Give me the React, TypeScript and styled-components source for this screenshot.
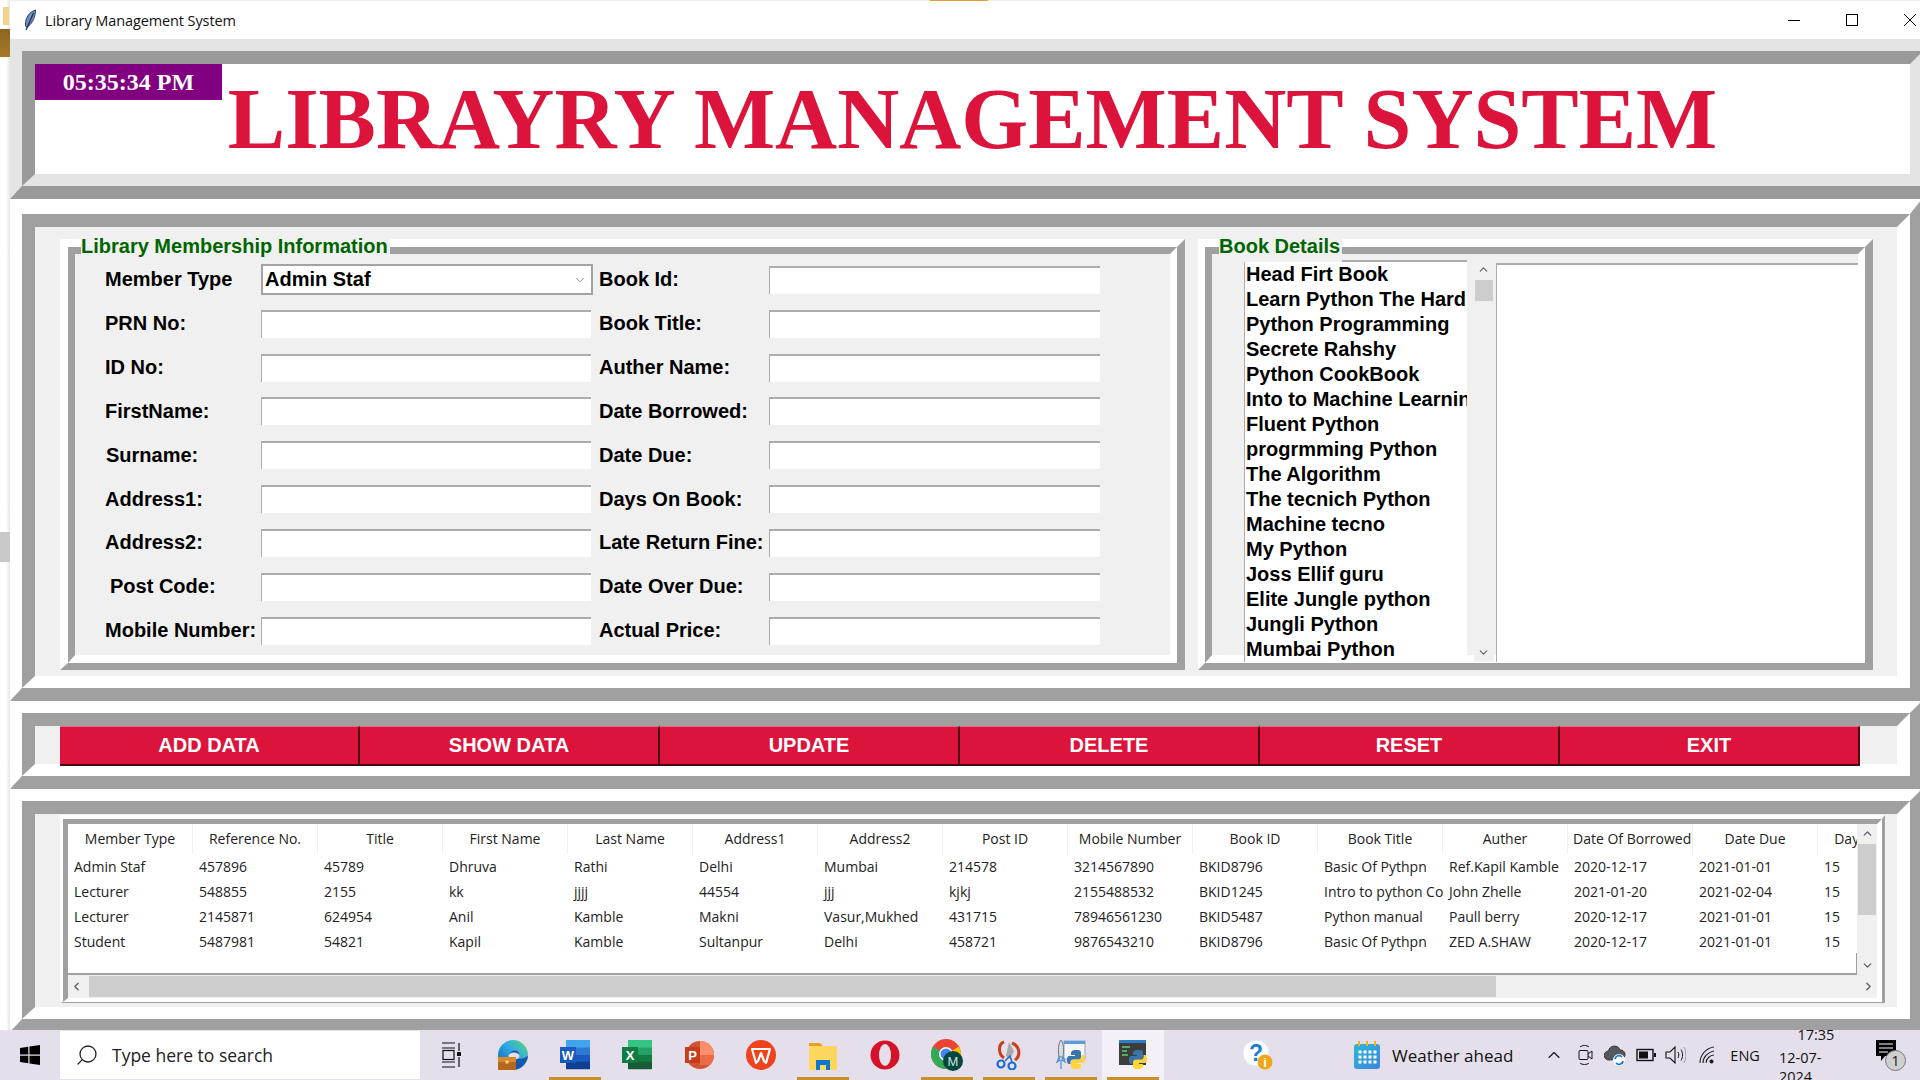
import React from "react";
import styled, { createGlobalStyle } from "styled-components";
import { ChevronDown, ChevronLeft, ChevronRight, ChevronUp, Search } from "lucide-react";

const MEMBER_LABELS = ["Member Type", "PRN No:", "ID No:", "FirstName:", "Surname:", "Address1:", "Address2:", "Post Code:", "Mobile Number:"];
const BOOK_LABELS = ["Book Id:", "Book Title:", "Auther Name:", "Date Borrowed:", "Date Due:", "Days On Book:", "Late Return Fine:", "Date Over Due:", "Actual Price:"];
const BOOKS = ["Head Firt Book", "Learn Python The Hard Way", "Python Programming", "Secrete Rahshy", "Python CookBook", "Into to Machine Learning", "Fluent Python", "progrmming Python", "The Algorithm", "The tecnich Python", "Machine tecno", "My Python", "Joss Ellif guru", "Elite Jungle python", "Jungli Python", "Mumbai Python"];
const BUTTONS = ["ADD DATA", "SHOW DATA", "UPDATE", "DELETE", "RESET", "EXIT"];
const COLUMNS = ["Member Type", "Reference No.", "Title", "First Name", "Last Name", "Address1", "Address2", "Post ID", "Mobile Number", "Book ID", "Book Title", "Auther", "Date Of Borrowed", "Date Due", "Days On Book"];
const ROWS = [
  ["Admin Staf", "457896", "45789", "Dhruva", "Rathi", "Delhi", "Mumbai", "214578", "3214567890", "BKID8796", "Basic Of Pythpn", "Ref.Kapil Kamble", "2020-12-17", "2021-01-01", "15"],
  ["Lecturer", "548855", "2155", "kk", "jjjj", "44554", "jjj", "kjkj", "2155488532", "BKID1245", "Intro to python Cookbook", "John Zhelle", "2021-01-20", "2021-02-04", "15"],
  ["Lecturer", "2145871", "624954", "Anil", "Kamble", "Makni", "Vasur,Mukhed", "431715", "78946561230", "BKID5487", "Python manual", "Paull berry", "2020-12-17", "2021-01-01", "15"],
  ["Student", "5487981", "54821", "Kapil", "Kamble", "Sultanpur", "Delhi", "458721", "9876543210", "BKID8796", "Basic Of Pythpn", "ZED A.SHAW", "2020-12-17", "2021-01-01", "15"],
];

const GlobalStyle = createGlobalStyle`
  html, body {
    margin: 0;
    width: 1920px;
    height: 1080px;
    overflow: hidden;
    background: #fff;
  }
  * { box-sizing: border-box; }
`;

//layout
const Screen = styled.div`
  width: 1920px;
  height: 1080px;
  display: flex;
  flex-direction: column;
  font-family: "Liberation Sans", Arial, sans-serif;
`;
const Desktop = styled.div`
  flex: 1;
  min-height: 0;
  display: flex;
`;
const Sliver = styled.div`
  width: 10px;
  flex-shrink: 0;
  background: linear-gradient(to right, #fff 60%, #e6e6e6);
  .note { width: 6px; height: 18px; margin: 7px 0 0 3px; background: #f2d58a; }
  .wood { height: 28px; margin-top: 4px; background: linear-gradient(#8c6420, #a87a28); }
  .gray { height: 30px; margin-top: 475px; background: #c9c9c9; }
`;
const Window = styled.div`
  position: relative;
  flex: 1;
  min-width: 0;
  height: 1030px;
  overflow: hidden;
  background: #fff;
`;
const TitleBar = styled.div`
  height: 39px;
  display: flex;
  align-items: center;
  padding-left: 13px;
  border-top: 1px solid #f0f0f0;
  background: #fff;
  font: 14.5px "Open Sans", sans-serif;
  color: #111;
  .label { margin-left: 8px; letter-spacing: -0.1px; }
`;
const OrangeEdge = styled.div`
  position: absolute;
  top: 0;
  left: 920px;
  width: 58px;
  height: 1px;
  background: #e0a030;
`;
const WinButtons = styled.div`
  margin-left: auto;
  display: flex;
  align-items: center;
  padding-right: 4px;
  svg { display: block; margin-left: 46px; }
`;

//tk style ridge: two nested solid borders
type RidgeProps = { $light: string; $dark: string; $w: string };
const RidgeOut = styled.div<RidgeProps & { $width?: number; $height?: number }>`
  border-style: solid;
  border-width: ${({ $w }) => $w};
  border-color: ${({ $light, $dark }) => `${$light} ${$dark} ${$dark} ${$light}`};
  width: ${({ $width }) => ($width ? `${$width}px` : "auto")};
  height: ${({ $height }) => ($height ? `${$height}px` : "auto")};
  flex-shrink: 0;
  position: relative;
`;
const RidgeIn = styled.div<RidgeProps>`
  height: 100%;
  border-style: solid;
  border-width: ${({ $w }) => $w};
  border-color: ${({ $light, $dark }) => `${$dark} ${$light} ${$light} ${$dark}`};
`;

const BigFrame: React.FC<{ width?: number; height: number; top?: number; light?: string; dark?: string; children: React.ReactNode }> = ({
  width = 1912, height, top = 12, light = "#ffffff", dark = "#a0a0a0", children,
}) => (
  <RidgeOut $light={light} $dark={dark} $w={`${top}px 12px 13px 12px`} $width={width} $height={height}>
    <RidgeIn $light={light} $dark={dark} $w="13px 13px 12px 13px">{children}</RidgeIn>
  </RidgeOut>
);

const Banner = styled.div`
  position: relative;
  height: 100%;
  background: #fff;
  display: flex;
  align-items: center;
  justify-content: center;
`;
const Clock = styled.div`
  position: absolute;
  top: 0;
  left: 0;
  width: 187px;
  height: 36px;
  background: #800080;
  color: #fff;
  font: bold 24px "Liberation Serif", serif;
  display: flex;
  align-items: center;
  justify-content: center;
`;
const BigTitle = styled.h1`
  margin: 0;
  color: #dc143c;
  font: bold 86px "Liberation Serif", serif;
  white-space: nowrap;
`;

const InfoBody = styled.div`
  height: 100%;
  background: #f0f0f0;
  padding: 12px 0 0 25px;
  display: flex;
  gap: 13px;
`;
const Legend = styled.div<{ $left: number }>`
  position: absolute;
  top: -8px;
  left: ${({ $left }) => $left}px;
  padding-right: 2px;
  height: 23px;
  line-height: 14px;
  background: #f0f0f0;
  color: #006400;
  font-weight: bold;
  font-size: 20px;
  white-space: nowrap;
  z-index: 1;
`;
const FormGrid = styled.div`
  padding: 4px 0 0 30px;
  display: grid;
  grid-template-columns: 156px 332px 176px 331px;
  grid-auto-rows: 43.83px;
  align-items: center;
  background: #f0f0f0;
  height: 100%;
`;
const FieldLabel = styled.label<{ $indent?: number }>`
  padding-left: ${({ $indent }) => $indent ?? 0}px;
  font-size: 20px;
  font-weight: bold;
  color: #000;
  white-space: nowrap;
`;
const Entry = styled.div`
  width: 330px;
  height: 28px;
  background: #fff;
  border-top: 2px solid #acacac;
  border-left: 1px solid #acacac;
`;
const Combo = styled.div`
  width: 332px;
  height: 31px;
  background: #fff;
  border: 2px solid #a3a3a3;
  padding: 0 4px 0 2px;
  display: flex;
  align-items: center;
  justify-content: space-between;
  font-size: 20px;
  font-weight: bold;
  color: #000;
`;
const BookBody = styled.div`
  height: 100%;
  padding: 6px 0 0 32px;
  display: flex;
  background: #f0f0f0;
`;
const ListBox = styled.ul`
  margin: 0;
  padding: 0 0 0 1px;
  width: 226px;
  height: 402px;
  list-style: none;
  overflow: hidden;
  background: #fff;
  border-top: 2px solid #acacac;
  border-left: 1px solid #acacac;
  li {
    height: 25px;
    line-height: 25px;
    font-size: 20px;
    font-weight: bold;
    color: #000;
    white-space: nowrap;
  }
`;
const VScroll = styled.div<{ $h: number; $thumbTop: number; $thumbH: number; $ml?: number }>`
  position: relative;
  width: 20px;
  height: ${({ $h }) => $h}px;
  margin-left: ${({ $ml }) => $ml ?? 0}px;
  flex-shrink: 0;
  background: #f0f0f0;
  display: flex;
  flex-direction: column;
  align-items: center;
  justify-content: space-between;
  padding: 3px 0;
  color: #606060;
  &::after {
    content: "";
    position: absolute;
    left: 1px;
    right: 1px;
    top: ${({ $thumbTop }) => $thumbTop}px;
    height: ${({ $thumbH }) => $thumbH}px;
    background: #cdcdcd;
  }
`;
const TextBox = styled.div`
  width: 368px;
  height: 399px;
  margin: 3px 0 0 2px;
  background: #fff;
  border-top: 2px solid #acacac;
  border-left: 1px solid #acacac;
`;

const ButtonBody = styled.div`
  height: 100%;
  background: #f0f0f0;
  padding-left: 25px;
`;
const ButtonRow = styled.div`
  width: 1800px;
  height: 40px;
  display: flex;
`;
const ActionButton = styled.button`
  flex: 1;
  padding: 0;
  background: #dc143c;
  color: #fff;
  border: 0;
  border-top: 1px solid #ee6a84;
  border-bottom: 2px solid #4a0714;
  border-right: 2px solid #4a0714;
  font: bold 20px "Liberation Sans", Arial, sans-serif;
`;

const TableBody = styled.div`
  height: 100%;
  background: #f0f0f0;
  padding: 1px 0 0 25px;
`;
const TreeArea = styled.div`
  height: 100%;
  display: grid;
  grid-template-columns: 1789px 20px;
  grid-template-rows: 151px 23px;
  background: #f0f0f0;
`;
const TreeView = styled.div`
  position: relative;
  overflow: hidden;
  background: #fff;
  border-bottom: 2px solid #a0a0a0;
  font: 14px "Open Sans", sans-serif;
  color: #222;
  &::after {
    content: "";
    position: absolute;
    right: 0;
    bottom: 0;
    width: 1px;
    height: 20px;
    background: #a0a0a0;
  }
`;
const HeadRow = styled.div`
  display: flex;
  height: 30px;
  width: 1875px;
`;
const HeadCell = styled.div`
  width: 125px;
  flex-shrink: 0;
  line-height: 30px;
  text-align: center;
  overflow: hidden;
  white-space: nowrap;
  border-right: 1px solid #efefef;
  padding: 0 5px;
`;
const DataRow = styled.div`
  display: flex;
  height: 25px;
  width: 1875px;
`;
const DataCell = styled.div`
  width: 125px;
  flex-shrink: 0;
  line-height: 25px;
  padding: 0 5px 0 6px;
  overflow: hidden;
  white-space: nowrap;
`;
const HScroll = styled.div`
  position: relative;
  height: 23px;
  grid-column: 1 / 3;
  background: #f0f0f0;
  display: flex;
  align-items: center;
  justify-content: space-between;
  padding: 0 2px 0 2px;
  color: #606060;
  &::after {
    content: "";
    position: absolute;
    left: 21px;
    width: 1407px;
    top: 1px;
    bottom: 1px;
    background: #cdcdcd;
  }
`;

//taskbar
const TaskBar = styled.div`
  height: 50px;
  flex-shrink: 0;
  display: flex;
  align-items: center;
  background: #e5dfeb;
  color: #111;
  font-family: "Open Sans", sans-serif;
`;
const StartSlot = styled.div`
  width: 60px;
  display: flex;
  justify-content: center;
`;
const SearchBox = styled.div`
  width: 360px;
  height: 48px;
  background: #fff;
  display: flex;
  align-items: center;
  padding-left: 15px;
  gap: 13px;
  font-size: 17.5px;
  color: #222;
`;
const TaskSlot = styled.div<{ $open?: boolean; $active?: boolean }>`
  position: relative;
  width: 62px;
  height: 50px;
  display: flex;
  align-items: center;
  justify-content: center;
  background: ${({ $active }) => ($active ? "#f3f0f7" : "transparent")};
  &::after {
    content: "";
    display: ${({ $open }) => ($open ? "block" : "none")};
    position: absolute;
    left: 5px;
    right: 5px;
    bottom: 0;
    height: 3px;
    background: #c98f2b;
  }
`;
const TrayItem = styled.div<{ $ml: number }>`
  margin-left: ${({ $ml }) => $ml}px;
  display: flex;
  align-items: center;
  flex-shrink: 0;
  font-size: ${({ $ml }) => ($ml === 12 ? "17px" : "14.5px")};
  white-space: nowrap;
`;
const ClockStack = styled.div`
  margin-left: 19px;
  width: 74px;
  display: flex;
  flex-direction: column;
  align-items: center;
  gap: 4px;
  font-size: 14.5px;
  line-height: 19px;
`;
const NoteWrap = styled.div`
  position: relative;
  margin-left: 23px;
  width: 30px;
  height: 30px;
`;
const NoteBadge = styled.span`
  position: absolute;
  right: 0;
  bottom: -1px;
  width: 21px;
  height: 21px;
  border-radius: 50%;
  background: #cfcfcf;
  border: 1px solid #777;
  color: #111;
  font-size: 14px;
  line-height: 19px;
  text-align: center;
`;

//icons
const Svg: React.FC<{ s?: number; w?: number; h?: number; children: React.ReactNode }> = ({ s = 30, w, h, children }) => (
  <svg width={w ?? s} height={h ?? s} viewBox={`0 0 ${w ?? s} ${h ?? s}`} fill="none">{children}</svg>
);
const Feather = () => (
  <Svg w={14} h={22}>
    <path d="M12.5 1C6 3 2.5 9 2.5 15c0 1.5.5 3 1.2 3.5C8 16 12.5 9 12.5 1z" fill="#6f8fc4" stroke="#2c3f63" strokeWidth="1" />
    <path d="M10.5 4L3 21" stroke="#1d2a44" strokeWidth="1.2" />
  </Svg>
);
const StartIcon = () => (
  <Svg w={20} h={20}>
    <path d="M0 3l8.3-1.2v7.7H0zM9.5 1.6L20 0v9.5H9.5zM0 10.7h8.3v7.6L0 17.1zM9.5 10.7H20V20L9.5 18.5z" fill="#000" />
  </Svg>
);
const TaskViewIcon = () => (
  <Svg w={20} h={26}>
    <path d="M1 1h13M1 6h13M1 20h13M1 25h13M18 1v8M18 15v10" stroke="#111" strokeWidth="1.2" />
    <rect x="2" y="8.5" width="11" height="9" stroke="#111" strokeWidth="1.2" />
    <rect x="16" y="10" width="4" height="4" fill="#111" />
  </Svg>
);
const EdgeIcon = () => (
  <Svg>
    <defs>
      <linearGradient id="edge" x1="0" y1="1" x2="1" y2="0">
        <stop offset="0" stopColor="#0c59a4" />
        <stop offset="0.55" stopColor="#2fa8e8" />
        <stop offset="1" stopColor="#5fdc72" />
      </linearGradient>
    </defs>
    <circle cx="15" cy="15" r="15" fill="url(#edge)" />
    <path d="M11 15c1-5 8-6 10-2 1 3-2 5-4 5 3 2 8 1 13-2-1 8-8 14-15 14z" fill="#1557a8" />
    <ellipse cx="16" cy="16" rx="5.5" ry="3.5" fill="#e5dfeb" />
    <rect x="0" y="17" width="18" height="13" rx="1" fill="#b4681e" />
    <rect x="0" y="17" width="18" height="5" fill="#d98a2c" />
    <rect x="7.5" y="20.5" width="3" height="3" fill="#ffd27a" />
  </Svg>
);
const BandIcon: React.FC<{ colors: string[]; badge: string; letter: string }> = ({ colors, badge, letter }) => (
  <Svg>
    {colors.map((c, i) => (
      <rect key={c} x="6" y={i * 7.25} width="24" height="7.5" fill={c} />
    ))}
    <rect x="0" y="7" width="16" height="16" fill={badge} />
    <text x="8" y="20" textAnchor="middle" fill="#fff" fontSize="13" fontWeight="bold" fontFamily="Liberation Sans">{letter}</text>
  </Svg>
);
const PowerPointIcon = () => (
  <Svg>
    <circle cx="16" cy="15" r="14" fill="#d35230" />
    <path d="M16 1a14 14 0 0 1 14 14H16z" fill="#ff8f6b" />
    <path d="M16 15h14a14 14 0 0 1-4 10H16z" fill="#ed6c47" />
    <rect x="1" y="7" width="15" height="16" fill="#c43e1c" />
    <text x="8.5" y="20" textAnchor="middle" fill="#fff" fontSize="13" fontWeight="bold" fontFamily="Liberation Sans">P</text>
  </Svg>
);
const WpsIcon = () => (
  <Svg>
    <circle cx="15" cy="15" r="15" fill="#f0421c" />
    <path d="M6 9h18l-4 14-2-2-3-8-3 8-2 2z" stroke="#fff" strokeWidth="2.2" strokeLinejoin="round" />
  </Svg>
);
const FolderIcon = () => (
  <Svg w={28} h={30}>
    <path d="M0 3h11l3 3H0z" fill="#e5a21a" />
    <rect x="0" y="6" width="28" height="24" rx="1" fill="#fdd65c" />
    <path d="M7 30V20h14v10h-4v-5h-6v5z" fill="#0e78c8" />
  </Svg>
);
const OperaIcon = () => (
  <Svg>
    <circle cx="15" cy="15" r="14.5" fill="#d5122a" />
    <ellipse cx="15" cy="15" rx="6" ry="11" fill="#e5dfeb" />
  </Svg>
);
const ChromeIcon = () => (
  <Svg w={32} h={32}>
    <circle cx="15" cy="15" r="15" fill="#ea4335" />
    <path d="M15 15L28 7.5A15 15 0 0 1 15 30z" fill="#fbbc05" />
    <path d="M15 15L15 30A15 15 0 0 1 2 7.5z" fill="#34a853" />
    <circle cx="15" cy="15" r="7" fill="#fff" />
    <circle cx="15" cy="15" r="5.5" fill="#4285f4" />
    <circle cx="22" cy="22" r="10" fill="#00473f" />
    <text x="22" y="27" textAnchor="middle" fill="#cfe0dc" fontSize="13" fontFamily="Liberation Sans">M</text>
  </Svg>
);
const SnipIcon = () => (
  <Svg w={26} h={30}>
    <path d="M8 2C2 4 2 14 8 18M16 3c8 3 9 13 3 17" stroke="#c8401c" strokeWidth="3" />
    <path d="M13 2l-3 14 4 3 4-8z" fill="#a8a8a8" />
    <path d="M9 21l5-5 2 6" stroke="#1c6fd0" strokeWidth="1.5" />
    <circle cx="5" cy="24" r="3.5" stroke="#1c6fd0" strokeWidth="2.2" />
    <circle cx="16" cy="26" r="3.5" stroke="#1c6fd0" strokeWidth="2.2" />
  </Svg>
);
const PythonMark: React.FC<{ x: number; y: number }> = ({ x, y }) => (
  <g transform={`translate(${x} ${y})`}>
    <path d="M8 0h3c2 0 3 1 3 3v4c0 1.500-1 2.500-3 2.500H6c-1.500 0-2.500 1-2.500 2.500v2H2c-1.500 0-2-2-2-4s.5-4 2-4h6V5H4V3c0-2 2-3 4-3z" fill="#3776ab" />
    <path d="M10 19H7c-2 0-3-1-3-3v-4c0-1.500 1-2.500 3-2.500h5c1.500 0 2.500-1 2.500-2.500V5H16c1.500 0 2 2 2 4s-.5 4-2 4h-6v1h4v2c0 2-2 3-4 3z" fill="#ffd43b" />
  </g>
);
const RocketIcon = () => (
  <Svg>
    <rect x="8" y="1" width="21" height="18" fill="#f4f6f9" stroke="#8fa6c4" />
    <rect x="8" y="1" width="21" height="3" fill="#5f9ad8" />
    <path d="M5 0c3 4 3 10 2 17H3C2 10 2 4 5 0z" fill="#d8dde2" stroke="#6c7680" />
    <path d="M3 17l-2 5 3-2zM7 17l2 5-3-2zM5 20v9" stroke="#4a8fd8" strokeWidth="1.2" />
    <PythonMark x={11} y={10} />
  </Svg>
);
const IdleIcon = () => (
  <Svg w={28} h={30}>
    <rect x="0" y="0" width="27" height="25" fill="#3d3d3d" />
    <rect x="0" y="0" width="27" height="3" fill="#2a80c8" />
    <path d="M3 7h8M3 11h5M3 15h6" stroke="#5fcf6f" strokeWidth="1.400" />
    <PythonMark x={10} y={10} />
  </Svg>
);
const HelpIcon = () => (
  <Svg>
    <circle cx="13" cy="13" r="13" fill="#fff" />
    <circle cx="13" cy="13" r="13" stroke="#d6eefa" />
    <text x="13" y="21" textAnchor="middle" fill="#1c7fd0" fontSize="23" fontWeight="bold" fontFamily="Liberation Sans">?</text>
    <circle cx="22" cy="22" r="7.5" fill="#f2a516" />
    <text x="22" y="27" textAnchor="middle" fill="#fff" fontSize="13" fontWeight="bold" fontFamily="Liberation Sans">i</text>
  </Svg>
);
const CalendarIcon = () => (
  <Svg w={26} h={28}>
    <defs>
      <linearGradient id="cal" x1="0" y1="0" x2="1" y2="1">
        <stop offset="0" stopColor="#2bb8d4" />
        <stop offset="1" stopColor="#3d86e2" />
      </linearGradient>
    </defs>
    <rect x="0" y="3" width="26" height="25" rx="3" fill="url(#cal)" />
    <path d="M5 0v5M13 0v5M21 0v5" stroke="#f2b416" strokeWidth="2" />
    {[6, 11, 16, 21].flatMap((x) => [11, 16, 21].map((y) => <rect key={`${x}-${y}`} x={x - 1.500} y={y - 1.500} width="3" height="3" fill="#fff" />))}
  </Svg>
);
const MeetIcon = () => (
  <Svg w={15} h={22}>
    <path d="M2 3c2-2 7-2 9 0M2 19c2 2 7 2 9 0" stroke="#111" />
    <rect x="1" y="6.500" width="9" height="9" rx="1" stroke="#111" />
    <path d="M10 10l4-3v8l-4-3" stroke="#111" />
  </Svg>
);
const CloudIcon = () => (
  <Svg w={22} h={22}>
    <path d="M5 16a4.500 4.500 0 0 1-.5-9A6 6 0 0 1 16 6a4.500 4.500 0 0 1 1 9z" fill="#55595e" stroke="#333" />
    <circle cx="15" cy="16" r="6" fill="#fff" />
    <path d="M11 15a4 4 0 0 1 7-2M19 17a4 4 0 0 1-7 2" stroke="#1479d8" strokeWidth="1.800" />
  </Svg>
);
const BatteryIcon = () => (
  <Svg w={20} h={14}>
    <rect x="1" y="1.500" width="16" height="11" stroke="#111" strokeWidth="1.400" />
    <rect x="3" y="3.500" width="9" height="7" fill="#111" />
    <rect x="18" y="5" width="2" height="4" fill="#111" />
  </Svg>
);
const VolumeIcon = () => (
  <Svg w={21} h={20}>
    <path d="M1 7h4l5-5v16l-5-5H1z" stroke="#111" strokeWidth="1.100" />
    <path d="M13 7c1 2 1 4 0 6M16 4.500c2 3 2 8 0 11" stroke="#111" />
    <path d="M19 2c2.500 4 2.500 12 0 16" stroke="#999" />
  </Svg>
);
const WifiIcon = () => (
  <Svg w={16} h={18}>
    <path d="M1 17C1 9 7 2 15 1M4 17c0-6 5-11 11-12M7 17c0-4 4-8 8-8" stroke="#222" strokeWidth="1.100" />
    <circle cx="12.500" cy="15.500" r="2" fill="#111" />
  </Svg>
);
const NoteIcon = () => (
  <Svg w={20} h={22}>
    <path d="M0 0h20v16h-11l-4 5v-5H0z" fill="#000" />
    <path d="M3 4h14M3 8h14M3 12h9" stroke="#fff" />
  </Svg>
);

const App: React.FC = () => {
  return (
    <Screen>
      <GlobalStyle />
      <Desktop>
        <Sliver>
          <div className="note" />
          <div className="wood" />
          <div className="gray" />
        </Sliver>
        <Window>
          <OrangeEdge />
          <TitleBar>
            <Feather />
            <span className="label">Library Management System</span>
            <WinButtons>
              <Svg w={12} h={12}><path d="M0 6.500h12" stroke="#000" /></Svg>
              <Svg w={12} h={12}><rect x="0.500" y="0.500" width="11" height="11" stroke="#000" /></Svg>
              <Svg w={12} h={12}><path d="M0 0l12 12M12 0L0 12" stroke="#000" /></Svg>
            </WinButtons>
          </TitleBar>

          <BigFrame width={1925} height={160} light="#e4e4e4" dark="#9a9a9a">
            <Banner>
              <Clock>05:35:34 PM</Clock>
              <BigTitle>LIBRAYRY MANAGEMENT SYSTEM</BigTitle>
            </Banner>
          </BigFrame>

          <BigFrame height={502} top={15}>
            <InfoBody>
              <RidgeOut $light="#ffffff" $dark="#a0a0a0" $w="8px 8px 7px 8px" $width={1125} $height={431}>
                <Legend $left={13}>Library Membership Information</Legend>
                <RidgeIn $light="#ffffff" $dark="#a0a0a0" $w="7px 7px 8px 7px">
                  <FormGrid>
                    {MEMBER_LABELS.map((label, i) => (
                      <React.Fragment key={label}>
                        <FieldLabel $indent={label === "Post Code:" ? 5 : label === "Surname:" ? 1 : 0}>{label}</FieldLabel>
                        {i === 0 ? (
                          <Combo>
                            Admin Staf
                            <ChevronDown size={14} color="#666" strokeWidth={1.2} />
                          </Combo>
                        ) : (
                          <Entry />
                        )}
                        <FieldLabel $indent={6}>{BOOK_LABELS[i]}</FieldLabel>
                        <Entry style={{ width: 331 }} />
                      </React.Fragment>
                    ))}
                  </FormGrid>
                </RidgeIn>
              </RidgeOut>

              <RidgeOut $light="#ffffff" $dark="#a0a0a0" $w="8px 8px 7px 7px" $width={675} $height={431}>
                <Legend $left={14}>Book Details</Legend>
                <RidgeIn $light="#ffffff" $dark="#a0a0a0" $w="7px 7px 8px 7px">
                  <BookBody>
                    <ListBox>
                      {BOOKS.map((book) => (
                        <li key={book}>{book}</li>
                      ))}
                    </ListBox>
                    <VScroll $h={402} $ml={7} $thumbTop={20} $thumbH={21}>
                      <ChevronUp size={13} strokeWidth={2} />
                      <ChevronDown size={13} strokeWidth={2} />
                    </VScroll>
                    <TextBox />
                  </BookBody>
                </RidgeIn>
              </RidgeOut>
            </InfoBody>
          </BigFrame>

          <BigFrame height={88}>
            <ButtonBody>
              <ButtonRow>
                {BUTTONS.map((b) => (
                  <ActionButton key={b}>{b}</ActionButton>
                ))}
              </ButtonRow>
            </ButtonBody>
          </BigFrame>

          <BigFrame height={243}>
            <TableBody>
              <RidgeOut $light="#ffffff" $dark="#a0a0a0" $w="4px 3px 1px 3px" $width={1825} $height={188}>
                <RidgeIn $light="#ffffff" $dark="#a0a0a0" $w="5px 5px 4px 5px">
                  <TreeArea>
                    <TreeView>
                      <HeadRow>
                        {COLUMNS.map((c) => (
                          <HeadCell key={c}>{c}</HeadCell>
                        ))}
                      </HeadRow>
                      {ROWS.map((row, r) => (
                        <DataRow key={r}>
                          {row.map((cell, i) => (
                            <DataCell key={i}>{cell}</DataCell>
                          ))}
                        </DataRow>
                      ))}
                    </TreeView>
                    <VScroll $h={151} $thumbTop={20} $thumbH={71}>
                      <ChevronUp size={13} strokeWidth={2.500} />
                      <ChevronDown size={13} strokeWidth={2.500} />
                    </VScroll>
                    <HScroll>
                      <ChevronLeft size={13} strokeWidth={2.500} />
                      <ChevronRight size={13} strokeWidth={2.500} />
                    </HScroll>
                  </TreeArea>
                </RidgeIn>
              </RidgeOut>
            </TableBody>
          </BigFrame>
        </Window>
      </Desktop>

      <TaskBar>
        <StartSlot><StartIcon /></StartSlot>
        <SearchBox>
          <Search size={24} strokeWidth={1.3} style={{ transform: "scaleX(-1)" }} />
          Type here to search
        </SearchBox>
        <TaskSlot style={{ marginLeft: 0 }}><TaskViewIcon /></TaskSlot>
        <TaskSlot><EdgeIcon /></TaskSlot>
        <TaskSlot $open><BandIcon colors={["#41a5ee", "#2b7cd3", "#185abd", "#103f91"]} badge="#185abd" letter="W" /></TaskSlot>
        <TaskSlot><BandIcon colors={["#33c481", "#21a366", "#107c41", "#185c37"]} badge="#107c41" letter="X" /></TaskSlot>
        <TaskSlot><PowerPointIcon /></TaskSlot>
        <TaskSlot><WpsIcon /></TaskSlot>
        <TaskSlot $open><FolderIcon /></TaskSlot>
        <TaskSlot><OperaIcon /></TaskSlot>
        <TaskSlot $open><ChromeIcon /></TaskSlot>
        <TaskSlot $open><SnipIcon /></TaskSlot>
        <TaskSlot $open><RocketIcon /></TaskSlot>
        <TaskSlot $open $active><IdleIcon /></TaskSlot>
        <TrayItem $ml={79}><HelpIcon /></TrayItem>
        <TrayItem $ml={81}><CalendarIcon /></TrayItem>
        <TrayItem $ml={12}>Weather ahead</TrayItem>
        <TrayItem $ml={31}><ChevronUp size={20} strokeWidth={1.3} /></TrayItem>
        <TrayItem $ml={14}><MeetIcon /></TrayItem>
        <TrayItem $ml={11}><CloudIcon /></TrayItem>
        <TrayItem $ml={10}><BatteryIcon /></TrayItem>
        <TrayItem $ml={9}><VolumeIcon /></TrayItem>
        <TrayItem $ml={13}><WifiIcon /></TrayItem>
        <TrayItem $ml={15}>ENG</TrayItem>
        <ClockStack>
          <span>17:35</span>
          <span>12-07-2024</span>
        </ClockStack>
        <NoteWrap>
          <NoteIcon />
          <NoteBadge>1</NoteBadge>
        </NoteWrap>
      </TaskBar>
    </Screen>
  );
};

export default App;
